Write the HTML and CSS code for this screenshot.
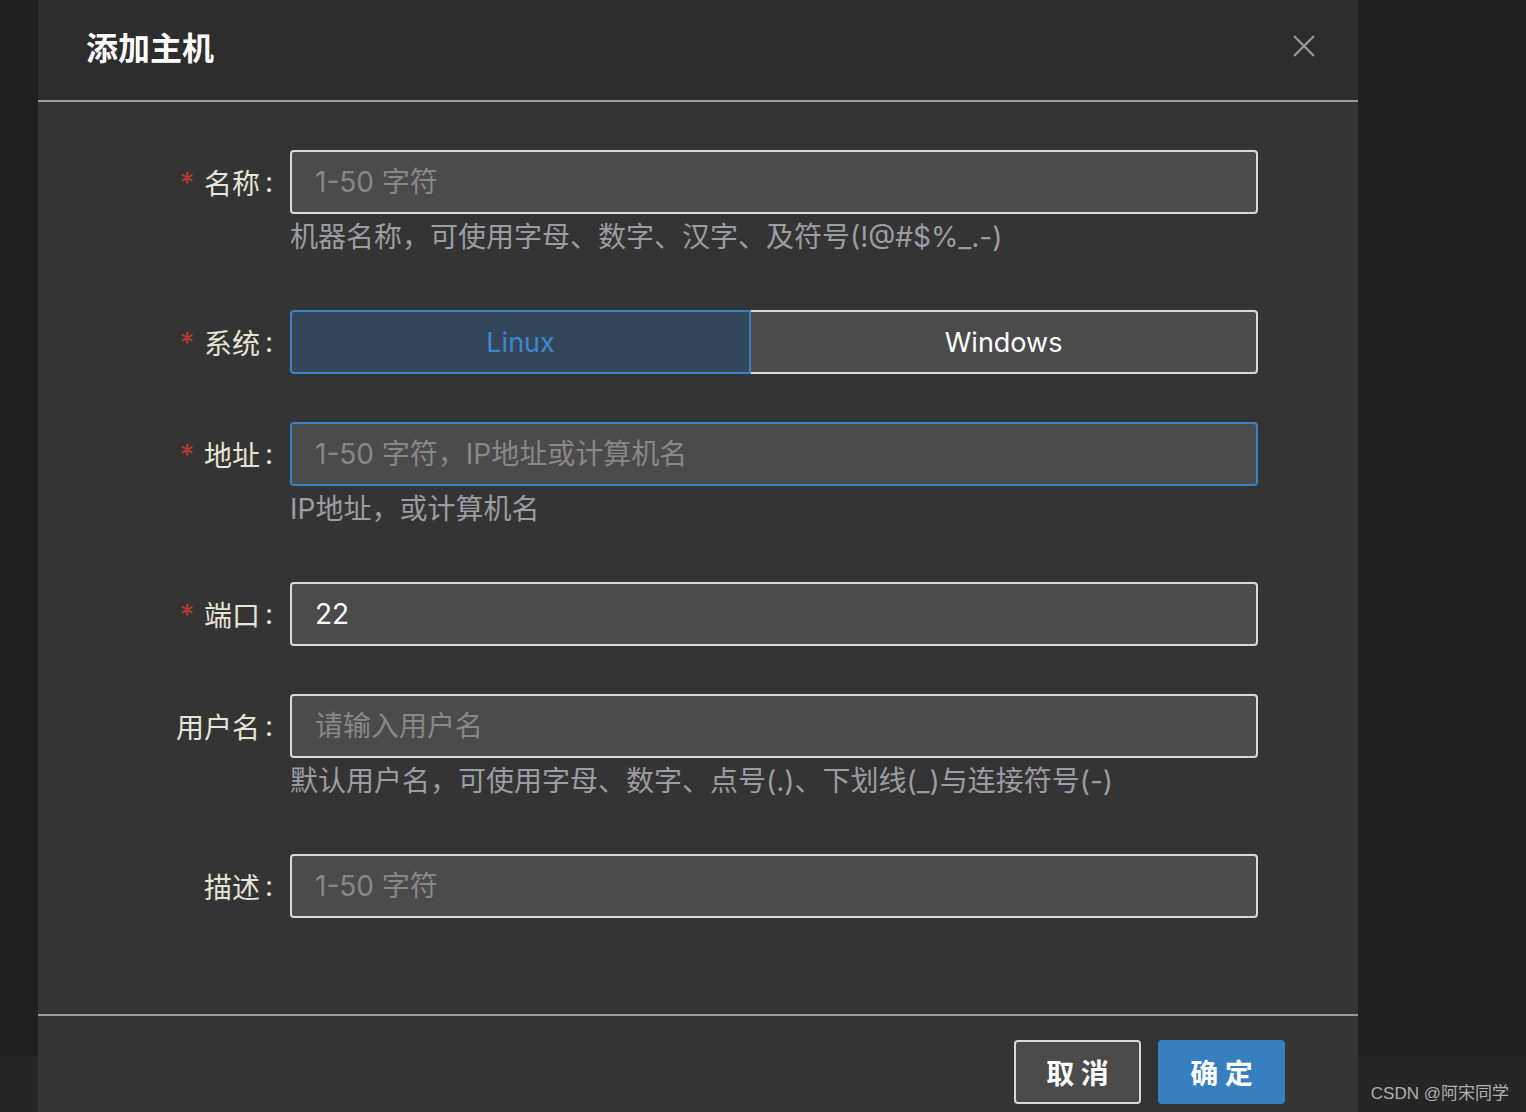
FILE: index.html
```html
<!DOCTYPE html>
<html>
<head>
    <link rel="stylesheet" href="styles.css">
</head>
<body>
    <div class="page">
        <div class="dialog">
            <div class="dialog-header">
                <div class="dialog-title">添加主机</div>
                <svg class="dialog-close" width="24" height="24" viewBox="0 0 24 24">
                    <path d="M2 2 L22 22 M22 2 L2 22" stroke="#9a9a9a" stroke-width="2.2" fill="none"/>
                </svg>
            </div>

            <div class="dialog-body">
                <div class="form-row">
                    <label class="form-label"><span class="required">*</span>名称<span class="colon">:</span></label>
                    <div class="form-control">
                        <input type="text" class="text-input" placeholder="1-50 字符">
                        <div class="form-help">机器名称，可使用字母、数字、汉字、及符号(!@#$%_.-)</div>
                    </div>
                </div>

                <div class="form-row">
                    <label class="form-label"><span class="required">*</span>系统<span class="colon">:</span></label>
                    <div class="form-control">
                        <div class="segmented">
                            <div class="segment segment-active">Linux</div>
                            <div class="segment">Windows</div>
                        </div>
                    </div>
                </div>

                <div class="form-row">
                    <label class="form-label"><span class="required">*</span>地址<span class="colon">:</span></label>
                    <div class="form-control">
                        <input type="text" class="text-input text-input-focus" placeholder="1-50 字符，IP地址或计算机名">
                        <div class="form-help">IP地址，或计算机名</div>
                    </div>
                </div>

                <div class="form-row">
                    <label class="form-label"><span class="required">*</span>端口<span class="colon">:</span></label>
                    <div class="form-control">
                        <input type="text" class="text-input" value="22">
                    </div>
                </div>

                <div class="form-row">
                    <label class="form-label">用户名<span class="colon">:</span></label>
                    <div class="form-control">
                        <input type="text" class="text-input" placeholder="请输入用户名">
                        <div class="form-help">默认用户名，可使用字母、数字、点号(.)、下划线(_)与连接符号(-)</div>
                    </div>
                </div>

                <div class="form-row">
                    <label class="form-label">描述<span class="colon">:</span></label>
                    <div class="form-control">
                        <input type="text" class="text-input" placeholder="1-50 字符">
                    </div>
                </div>
            </div>

            <div class="dialog-footer">
                <button class="btn btn-cancel">取 消</button>
                <button class="btn btn-primary">确 定</button>
            </div>
        </div>

        <div class="watermark">CSDN @阿宋同学</div>
    </div>
</body>
</html>
```

FILE: styles.css
```css
* {
    box-sizing: border-box;
}
body {
    margin: 0;
    background: #212121;
    font-family: "Inter", "Noto Sans CJK SC", sans-serif;
}
.page {
    position: relative;
    height: 1112px;
    overflow: hidden;
    background: linear-gradient(to bottom, #202020 0, #202020 1056px, #262626 1056px);
}
.dialog {
    width: 1320px;
    margin-left: 38px;
    height: 1112px;
    background: #343434;
}
.dialog-header {
    height: 102px;
    background: #2d2d2d;
    border-bottom: 2px solid #9b9b9b;
    display: flex;
    align-items: center;
    justify-content: space-between;
    padding: 0 42px 8px 48px;
}
.dialog-title {
    color: #fff;
    font-size: 32px;
    font-weight: 700;
}
.dialog-close {
    width: 24px;
    height: 24px;
}
.dialog-body {
    padding: 48px 100px 0 0;
    height: 912px;
}
.form-row {
    display: flex;
    align-items: flex-start;
    margin-bottom: 48px;
}
.form-label {
    width: 252px;
    flex-shrink: 0;
    height: 64px;
    display: flex;
    align-items: center;
    justify-content: flex-end;
    padding-right: 17px;
    color: #e6e4d6;
    font-size: 28px;
}
.colon {
    margin-left: 5px;
}
.required {
    color: #c0392f;
    font-size: 28px;
    margin-right: 10px;
    position: relative;
    top: 1px;
}
.form-control {
    flex: 1;
}
.text-input {
    display: block;
    width: 100%;
    height: 64px;
    background: #4b4b4b;
    border: 2px solid #d9d9d9;
    border-radius: 4px;
    padding: 0 23px;
    color: #fff;
    font-family: inherit;
    font-size: 28px;
    outline: none;
}
.text-input::placeholder {
    color: #888;
}
.text-input-focus {
    border-color: #3a80c6;
}
.form-help {
    color: #9a9ea2;
    font-size: 28px;
    line-height: 46px;
    height: 48px;
}
.segmented {
    display: flex;
    height: 64px;
}
.segment {
    display: flex;
    align-items: center;
    justify-content: center;
    background: #4b4b4b;
    border: 2px solid #d9d9d9;
    border-left: none;
    border-radius: 0 4px 4px 0;
    color: #fff;
    font-size: 27px;
    flex: 508;
}
.segment-active {
    flex: 460;
    background: #34475a;
    border: 2px solid #3a80c6;
    border-radius: 4px 0 0 4px;
    color: #3b88cf;
}
.dialog-footer {
    border-top: 2px solid #9b9b9b;
    display: flex;
    justify-content: flex-end;
    gap: 17px;
    padding: 24px 73px 0 0;
}
.btn {
    height: 64px;
    width: 127px;
    border-radius: 4px;
    font-family: "Noto Sans CJK SC", sans-serif;
    font-size: 28px;
    font-weight: 700;
    color: #fff;
    cursor: pointer;
}
.btn-cancel {
    background: #4b4b4b;
    border: 2px solid #d9d9d9;
}
.btn-primary {
    background: #3780bf;
    border: none;
}
.watermark {
    position: absolute;
    right: 17px;
    bottom: 8px;
    color: #b0b0b0;
    font-size: 17px;
    font-family: "Liberation Sans", "Noto Sans CJK SC", sans-serif;
}
```
